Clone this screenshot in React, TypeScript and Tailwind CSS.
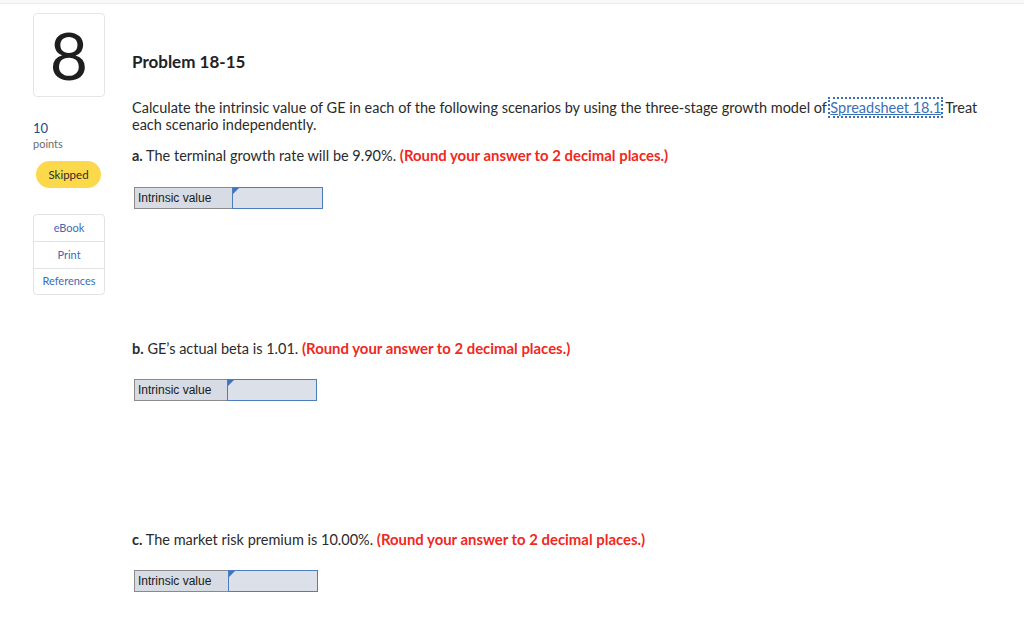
import type { ReactNode } from 'react';

const font = { fontFamily: 'Lato, "Open Sans", Arial, sans-serif' };

function AnswerRow({ labelWidth, inputWidth }: { labelWidth: string; inputWidth: string }) {
  return (
    <div className="flex h-[22px] w-fit" style={{ fontFamily: '"Liberation Sans", Arial, sans-serif' }}>
      <div
        className={`${labelWidth} flex items-center border border-r-0 border-[#8a8a8a] bg-[#d6dbe4] pl-[3px] text-[12px] text-[#1a1a1a]`}
      >
        Intrinsic value
      </div>
      <div className={`${inputWidth} relative border border-[#4d7dbf] bg-[#dce0e8]`}>
        <span className="absolute left-0 top-0 h-0 w-0 border-t-[6px] border-r-[6px] border-t-[#3f74c4] border-r-transparent" />
      </div>
    </div>
  );
}

function Part({ letter, children }: { letter: string; children: ReactNode }) {
  return (
    <p className="text-[14.5px] leading-[17px] text-[#2b2b2b]">
      <span className="font-bold">{letter}.</span> {children}{' '}
      <span className="text-[14.9px] font-bold text-[#f0281e]">(Round your answer to 2 decimal places.)</span>
    </p>
  );
}

export default function App() {
  return (
    <div className="min-h-screen bg-white" style={font}>
      <div className="h-[4px] border-b border-[#ececec] bg-[#f8f8f8]" />
      <div className="flex pl-[33px]">
        <aside className="w-[72px] shrink-0 pt-[9px]">
          <div className="flex h-[84px] items-center justify-center rounded-[4px] border border-[#e6e6e6]">
            <span className="text-[66px] font-normal leading-none text-[#1e1e1e]">8</span>
          </div>
          <div className="mt-[23px] text-[13px] leading-[16px] text-[#1c4b8c]">10</div>
          <div className="text-[11px] leading-[16px] text-[#6b6b6b]">points</div>
          <div className="ml-[3px] mt-[9px] flex h-[27px] w-[65px] items-center justify-center rounded-full bg-[#fcd94a] text-[11.5px] text-[#2b2b2b]">
            Skipped
          </div>
          <div className="mt-[26px] rounded-[4px] border border-[#e3e3e3] text-center text-[11px] text-[#3b6db5]">
            <div className="flex h-[27px] items-center justify-center border-b border-[#e3e3e3]">eBook</div>
            <div className="flex h-[27px] items-center justify-center border-b border-[#e3e3e3]">Print</div>
            <div className="flex h-[25px] items-center justify-center">References</div>
          </div>
        </aside>

        <main className="ml-[27px] pt-[48px]">
          <h1 className="text-[17px] font-bold leading-[20px] text-[#222]">Problem 18-15</h1>
          <p className="mt-[27px] text-[14.5px] leading-[17px] text-[#2b2b2b]">
            Calculate the intrinsic value of GE in each of the following scenarios by using the three-stage growth model of{' '}
            <a className="text-[#3a6fb5] underline outline-2 outline-dotted outline-[#3a6fb5]">Spreadsheet 18.1</a>
            <span className="ml-[4px]">Treat</span>
            <br />
            each scenario independently.
          </p>

          <div className="mt-[14px]">
            <Part letter="a">The terminal growth rate will be 9.90%.</Part>
          </div>
          <div className="ml-[2px] mt-[23px]">
            <AnswerRow labelWidth="w-[98px]" inputWidth="w-[91px]" />
          </div>

          <div className="mt-[131px]">
            <Part letter="b">GE’s actual beta is 1.01.</Part>
          </div>
          <div className="ml-[2px] mt-[22px]">
            <AnswerRow labelWidth="w-[93px]" inputWidth="w-[90px]" />
          </div>

          <div className="mt-[130px]">
            <Part letter="c">The market risk premium is 10.00%.</Part>
          </div>
          <div className="ml-[2px] mt-[22px]">
            <AnswerRow labelWidth="w-[94px]" inputWidth="w-[90px]" />
          </div>
        </main>
      </div>
    </div>
  );
}
